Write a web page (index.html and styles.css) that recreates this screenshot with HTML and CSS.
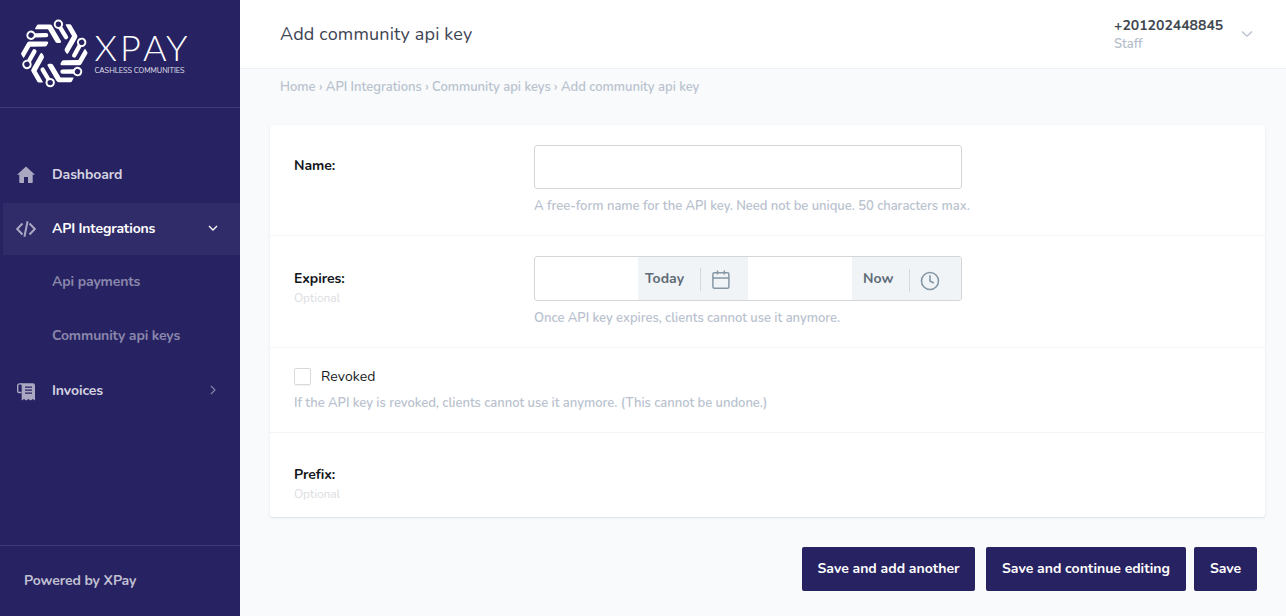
FILE: index.html
```html
<!DOCTYPE html>
<html lang="en">
<head>
<meta charset="utf-8">
<title>Add community api key</title>
<link rel="stylesheet" href="styles.css">
</head>
<body>
<div class="app">
  <aside class="sidebar">
    <div class="brand">
      <svg class="logo" width="240" height="107" viewBox="0 0 240 107">
        <defs>
          <g id="arm">
            <path d="M38.2 24.600H50Q51.400 24.600 52.200 26L61.100 41.300Q61.500 43 59.600 43H57.600Q56.200 43 55.500 41.900L48 29.300H35.600Q34.600 29.300 35.100 28.500L36.800 25.400Q37.300 24.600 38.200 24.600Z" fill="#fff"/>
            <path d="M60.400 27.800L66 37.200" fill="none" stroke="#fff" stroke-width="4.300" stroke-linecap="round"/>
            <circle cx="58.400" cy="24.200" r="3.700" fill="#272262" stroke="#fff" stroke-width="2"/>
          </g>
        </defs>
        <use href="#arm"/>
        <use href="#arm" transform="rotate(60 54.3 53.4)"/>
        <use href="#arm" transform="rotate(120 54.3 53.4)"/>
        <use href="#arm" transform="rotate(180 54.3 53.4)"/>
        <use href="#arm" transform="rotate(240 54.3 53.4)"/>
        <use href="#arm" transform="rotate(300 54.3 53.4)"/>
        <text class="logo-name" x="94.500 120 143 166" y="61">XPAY</text>
        <text class="logo-tag" x="94.500" y="72.500" textLength="90" lengthAdjust="spacingAndGlyphs">CASHLESS COMMUNITIES</text>
      </svg>
    </div>
    <nav class="menu">
      <a class="item">
        <svg class="icon" width="20" height="20" viewBox="0 0 20 20"><path d="M10 1.500L19 9.700H16.700V17.200Q16.700 18 15.900 18H12V12H8V18H4.100Q3.300 18 3.300 17.200V9.700H1Z" fill="currentColor"/></svg>
        <span class="label">Dashboard</span>
      </a>
      <a class="item active">
        <svg class="icon" width="20" height="20" viewBox="0 0 20 20"><path d="M6.500 4.500L1.200 10L6.500 15.500M13.500 4.500L18.800 10L13.500 15.500M11.600 2.300L8.400 17.700" fill="none" stroke="currentColor" stroke-width="2"/></svg>
        <span class="label">API Integrations</span>
        <svg class="caret" width="10" height="10" viewBox="0 0 10 10"><path d="M1 3L5 7L9 3" fill="none" stroke="currentColor" stroke-width="1.300"/></svg>
      </a>
      <a class="sub">Api payments</a>
      <a class="sub">Community api keys</a>
      <a class="item invoices">
        <svg class="icon" width="20" height="20" viewBox="0 0 20 20"><path d="M5.500 10.500H3Q1.700 10.500 1.700 9.200V4Q1.700 1.900 3.800 1.900H6" fill="none" stroke="currentColor" stroke-width="1.400"/><path fill-rule="evenodd" d="M3.800 1.200H17Q19 1.200 19 3.200V18.600L16.800 17L14.600 18.600L12.400 17L10.200 18.600L8 17L5.700 18.600V4Q5.700 2 3.800 1.200ZM9 4.500V5.700H16V4.500ZM9 7.500V8.700H16V7.500ZM9 10.500V11.700H16V10.500Z" fill="currentColor"/></svg>
        <span class="label">Invoices</span>
        <svg class="caret" width="10" height="10" viewBox="0 0 10 10"><path d="M3 1L7 5L3 9" fill="none" stroke="currentColor" stroke-width="1.100"/></svg>
      </a>
    </nav>
    <footer class="powered">Powered by XPay</footer>
  </aside>
  <div class="page">
    <header class="topbar">
      <h1 class="title">Add community api key</h1>
      <div class="user">
        <div><div class="phone">+201202448845</div><div class="role">Staff</div></div>
        <svg class="user-caret" width="12" height="8" viewBox="0 0 12 8"><path d="M1 1.500L6 6.200L11 1.500" fill="none" stroke="currentColor" stroke-width="1.200"/></svg>
      </div>
    </header>
    <main class="content">
      <div class="crumbs">Home › API Integrations › Community api keys › Add community api key</div>
      <form class="card">
        <section class="row name-row">
          <label class="field-label">Name:</label>
          <div>
            <div class="input"></div>
            <p class="help name-help">A free-form name for the API key. Need not be unique. 50 characters max.</p>
          </div>
        </section>
        <section class="row expires-row">
          <div><label class="field-label">Expires:</label><div class="optional">Optional</div></div>
          <div>
            <div class="datetime">
              <span class="slot"></span>
              <span class="pick today"><b class="pick-text today-text">Today</b><i class="bar"></i>
                <svg width="20" height="20" viewBox="0 0 20 20" fill="none" stroke="currentColor" stroke-width="1.500"><rect x="1.900" y="2.700" width="16" height="15.600" rx="1.500"/><path d="M1.900 8H17.900M6.500 .5V4.500M13.300 .5V4.500"/></svg>
              </span>
              <span class="slot"></span>
              <span class="pick now"><b class="pick-text now-text">Now</b><i class="bar"></i>
                <svg width="20" height="20" viewBox="0 0 20 20" fill="none" stroke="currentColor" stroke-width="1.600"><circle cx="10" cy="10" r="8.500"/><path d="M10 4.200V10L13.800 12"/></svg>
              </span>
            </div>
            <p class="help expires-help">Once API key expires, clients cannot use it anymore.</p>
          </div>
        </section>
        <section class="revoked-row">
          <label class="check"><span class="box"></span><span class="check-text">Revoked</span></label>
          <p class="help revoked-help">If the API key is revoked, clients cannot use it anymore. (This cannot be undone.)</p>
        </section>
        <section class="prefix-row">
          <label class="field-label">Prefix:</label><div class="optional">Optional</div>
        </section>
      </form>
      <div class="actions">
        <button class="btn another">Save and add another</button>
        <button class="btn continue">Save and continue editing</button>
        <button class="btn save">Save</button>
      </div>
    </main>
  </div>
</div>
</body>
</html>
```
FILE: styles.css
```css
* { box-sizing: border-box; }
body { margin: 0; font-family: Nunito, Lato, "Open Sans", sans-serif; font-size: 14px; overflow: hidden; }
.app { display: flex; height: 616px; }
.sidebar { width: 240px; flex: none; background: #272262; display: flex; flex-direction: column; }
.brand { height: 108px; border-bottom: 1px solid #403b74; }
.logo { display: block; }
.logo-name { font-family: Lato, sans-serif; font-weight: 300; font-size: 36px; fill: #fff; }
.logo-tag { font-family: Nunito, Lato, sans-serif; font-weight: 400; font-size: 7px; fill: #e3e2ee; }
.menu { flex: 1; padding-top: 41px; }
.item { display: flex; align-items: center; height: 52px; margin-left: 3px; padding: 0 22px 2px 13px; color: #a9a7c1; font-weight: 700; letter-spacing: -0.1px; }
.item.active { margin-top: 2px; background: #302b69; color: #fff; letter-spacing: -0.18px; }
.invoices { margin-top: 2px; }
.invoices .caret { color: #8886aa; }
.icon { margin-right: 16px; color: #a9a7c1; position: relative; top: 1px; }
.invoices .icon { top: 2px; }
.label { flex: 1; color: #d4d3e0; }
.active .label { color: #fff; }
.sub { display: block; height: 54px; padding-left: 52px; line-height: 54px; color: #8a87ab; font-weight: 700; letter-spacing: -0.13px; }
.powered { height: 71px; border-top: 1px solid #403b74; padding-left: 24px; line-height: 69px; color: #c1c0d2; font-weight: 700; letter-spacing: -0.1px; }
.page { flex: 1; background: #f8fafc; display: flex; flex-direction: column; }
.topbar { height: 69px; background: #fff; border-bottom: 1px solid #edf1f5; display: flex; justify-content: space-between; padding: 0 33px 0 40px; }
.title { margin: 0; font-size: 18px; font-weight: 400; line-height: 68px; letter-spacing: 0.17px; color: #3e4452; }
.user { display: flex; align-items: flex-start; width: 139px; justify-content: space-between; padding-top: 17px; }
.phone { font-size: 14px; line-height: 18px; font-weight: 700; color: #40474f; }
.role { font-size: 13px; line-height: 18px; font-weight: 600; color: #b5bfcb; }
.user-caret { margin-top: 13px; color: #b5bdca; }
.content { padding: 0 21px 0 30px; }
.crumbs { height: 56px; padding-left: 10px; line-height: 36px; font-size: 13px; font-weight: 600; letter-spacing: -0.015px; color: #b9c2ce; }
.card { height: 392px; background: #fff; border-radius: 3px; box-shadow: 0 1px 2px #dbe2e9; }
.row { display: grid; grid-template-columns: 240px 1fr; padding-left: 24px; border-bottom: 1px solid #f2f4f5; }
.name-row { height: 111px; padding-top: 20px; }
.expires-row { height: 112px; padding-top: 20px; }
.field-label { display: block; line-height: 20px; font-weight: 700; letter-spacing: -0.08px; color: #12151a; }
.name-row .field-label { margin-top: 11px; }
.expires-row .field-label { margin-top: 13px; }
.optional { font-size: 12px; line-height: 18px; letter-spacing: -0.08px; color: #dcdddf; }
.input { width: 428px; height: 44px; border: 1px solid #d5d6d8; border-radius: 3px; }
.help { margin: 0; font-size: 13px; line-height: 20px; font-weight: 600; letter-spacing: -0.022px; color: #b9c2ce; white-space: nowrap; }
.name-help { margin-top: 7px; }
.expires-help { margin-top: 7px; }
.datetime { display: flex; width: 428px; height: 45px; border: 1px solid #d5d6d8; border-radius: 3px; overflow: hidden; }
.slot { width: 104px; flex: none; }
.slot:first-child { width: 103px; }
.pick { display: flex; align-items: center; background: #f0f4f7; color: #8597a5; }
.today { width: 110px; padding-left: 7px; }
.now { width: 109px; padding-left: 11px; }
.pick-text { font-weight: 700; color: #5f6b77; }
.today-text { width: 55px; }
.now-text { width: 46px; }
.bar { width: 1px; height: 23px; margin: 1px 10px 0 0; background: #d3d9de; }
.now .bar { margin-top: 4px; }
.now svg { margin-top: 5px; }
.today svg { margin-top: 2px; }
.pick-text { margin-top: -1px; }
.revoked-row { height: 85px; padding: 17px 24px 0; border-bottom: 1px solid #f2f4f5; }
.check { display: flex; align-items: center; height: 22px; gap: 10px; color: #15181c; letter-spacing: 0.1px; }
.box { width: 17px; height: 17px; border: 1px solid #d9dadc; border-radius: 2px; box-shadow: 0 1px 1px #f0f0f0; }
.revoked-help { margin-top: 6px; }
.prefix-row { padding: 32px 24px 0; }
.actions { display: flex; justify-content: flex-end; margin-top: 30px; padding-right: 8px; }
.btn { height: 44px; border: 0; border-radius: 2px; padding: 0 0 2px; background: #272262; color: #fff; font-family: inherit; font-size: 14px; font-weight: 700; }
.another { width: 173px; margin-right: 11px; }
.continue { width: 200px; margin-right: 8px; }
.save { width: 63px; }
```
